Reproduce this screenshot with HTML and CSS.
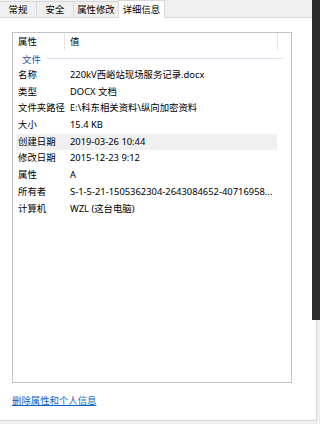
FILE: index.html
```html
<!DOCTYPE html>
<html lang="zh-CN">
<head>
    <meta charset="UTF-8">
    <meta name="viewport" content="width=device-width, initial-scale=1.0">
    <title>属性</title>
    <link rel="stylesheet" href="styles.css">
</head>
<body>
    <div class="window">
        <div class="tabs">
            <div class="tab t1">常规</div>
            <div class="tab t2">安全</div>
            <div class="tab t3">属性修改</div>
            <div class="tab active">详细信息</div>
        </div>
        <div class="panel">
            <div class="list">
                <div class="head">
                    <div class="hcol name">属性</div>
                    <div class="hcol value">值</div>
                    <div class="hcol rest"></div>
                </div>
                <div class="group"><span>文件</span><i></i></div>
                <div class="row"><span class="k">名称</span><span class="v">220kV西峪站现场服务记录.docx</span></div>
                <div class="row"><span class="k">类型</span><span class="v">DOCX 文档</span></div>
                <div class="row"><span class="k">文件夹路径</span><span class="v">E:\科东相关资料\纵向加密资料</span></div>
                <div class="row"><span class="k">大小</span><span class="v">15.4 KB</span></div>
                <div class="row sel"><span class="k">创建日期</span><span class="v">2019-03-26 10:44</span></div>
                <div class="row"><span class="k">修改日期</span><span class="v">2015-12-23 9:12</span></div>
                <div class="row"><span class="k">属性</span><span class="v">A</span></div>
                <div class="row"><span class="k">所有者</span><span class="v">S-1-5-21-1505362304-2643084652-40716958...</span></div>
                <div class="row"><span class="k">计算机</span><span class="v">WZL (这台电脑)</span></div>
            </div>
            <a class="link" href="#">删除属性和个人信息</a>
        </div>
    </div>
    <div class="edge"></div>
</body>
</html>
```
FILE: styles.css
```css
body { margin: 0; background: #f0f0f0; font-family: "Noto Sans", "Noto Sans CJK SC", sans-serif; font-size: 9.4px; color: #000; position: relative; height: 424px; overflow: hidden; }
.window { width: 317px; }
.tabs { display: flex; height: 17px; align-items: flex-end; }
.tab { height: 16px; line-height: 16px; text-align: center; border: 1px solid #d9d9d9; border-bottom: none; border-right: none; box-sizing: border-box; background: #f0f0f0; }
.t1 { width: 36px; border-left: none; }
.t2 { width: 37px; }
.t3 { width: 45px; }
.tab.active { width: 47px; height: 18px; line-height: 17px; background: #fff; border-right: 1px solid #d9d9d9; margin-bottom: -1px; position: relative; z-index: 1; }
.panel { background: #fff; border: 1px solid #d9d9d9; border-left: none; height: 404px; padding: 14px 0 0 12px; box-sizing: border-box; }
.list { width: 280px; height: 351px; border: 1px solid #c2c2c8; box-sizing: border-box; }
.head { display: flex; height: 17px; line-height: 17px; }
.hcol { border-right: 1px solid #e5e5e5; padding-left: 5px; }
.hcol.name { width: 46px; }
.hcol.value { width: 207px; }
.hcol.rest { flex: 1; border-right: none; }
.group { display: flex; align-items: center; height: 17px; padding-left: 9px; color: #1e4fb4; }
.group i { flex: 1; height: 1px; background: #dde4f2; margin: 0 8px 0 5px; }
.row { display: flex; height: 16.7px; line-height: 16.7px; margin-left: 3px; width: 261px; padding-left: 2px; box-sizing: border-box; }
.row.sel { background: #f0f0f0; }
.k { width: 52px; }
.v { white-space: nowrap; }
.link { display: inline-block; margin-top: 10px; color: #0b61c4; text-decoration: underline; }
.edge { position: absolute; top: 0; right: 0; width: 8px; height: 320px; background: #2b2b2b; }
```
